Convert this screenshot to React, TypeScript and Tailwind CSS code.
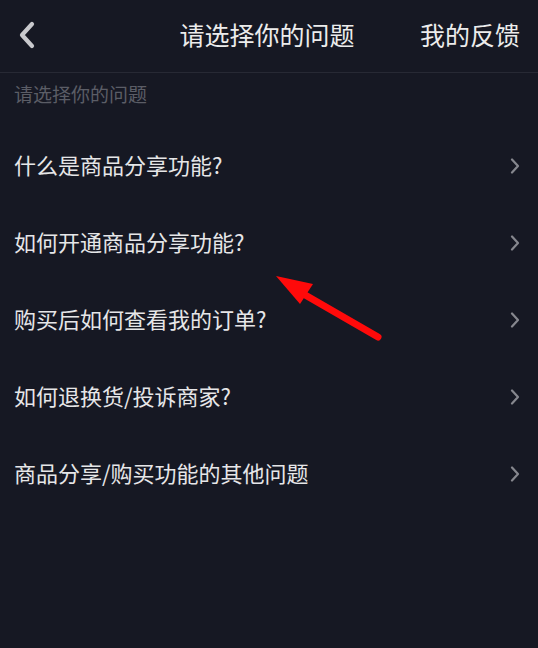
import React from "react";

const items = [
  "什么是商品分享功能?",
  "如何开通商品分享功能?",
  "购买后如何查看我的订单?",
  "如何退换货/投诉商家?",
  "商品分享/购买功能的其他问题",
];

function Chevron() {
  return (
    <svg width="10" height="16" viewBox="0 0 10 16" fill="none">
      <path d="M2 1.5 L8 8 L2 14.5" stroke="#86878e" strokeWidth="2.2" strokeLinecap="round" strokeLinejoin="round" />
    </svg>
  );
}

export default function App() {
  return (
    <div
      className="relative w-[538px] h-[648px] bg-[#161823] overflow-hidden"
      style={{ fontFamily: '"Noto Sans CJK SC", "Noto Sans", sans-serif' }}
    >
      <div className="relative h-[73px] border-b border-[#272934] flex items-center justify-between pl-[17px] pr-[18px]">
        <svg width="20" height="30" viewBox="0 0 20 30" fill="none" className="-mt-[2px]">
          <path d="M15 4 L5 15 L15 26" stroke="#c9c9cd" strokeWidth="4.2" strokeLinecap="round" strokeLinejoin="round" />
        </svg>
        <div className="absolute left-0 right-0 top-0 h-[72px] flex items-center justify-center pr-[4px] pointer-events-none">
          <span className="text-[25px] leading-[30px] text-[#ececec] -mt-[4px]">请选择你的问题</span>
        </div>
        <span className="text-[25px] leading-[30px] text-[#ececec] -mt-[4px]">我的反馈</span>
      </div>
      <div className="h-[54px] pt-[8px] pl-[14px] text-[19px] leading-[26px] text-[#5b5d66]">
        请选择你的问题
      </div>
      <div className="flex flex-col">
        {items.map((t) => (
          <div key={t} className="h-[77px] flex items-center justify-between pl-[14px] pr-[18px]">
            <span className="text-[22px] leading-[30px] text-[#e6e6e8] -mt-[4px]">{t}</span>
            <Chevron />
          </div>
        ))}
      </div>
      <svg
        className="absolute left-0 top-0 pointer-events-none"
        width="538"
        height="648"
        viewBox="0 0 538 648"
      >
        <line x1="378" y1="337" x2="300" y2="292" stroke="#ff0a0a" strokeWidth="7" strokeLinecap="round" />
        <polygon points="276,276 313,284 300,304" fill="#ff0a0a" />
      </svg>
    </div>
  );
}
